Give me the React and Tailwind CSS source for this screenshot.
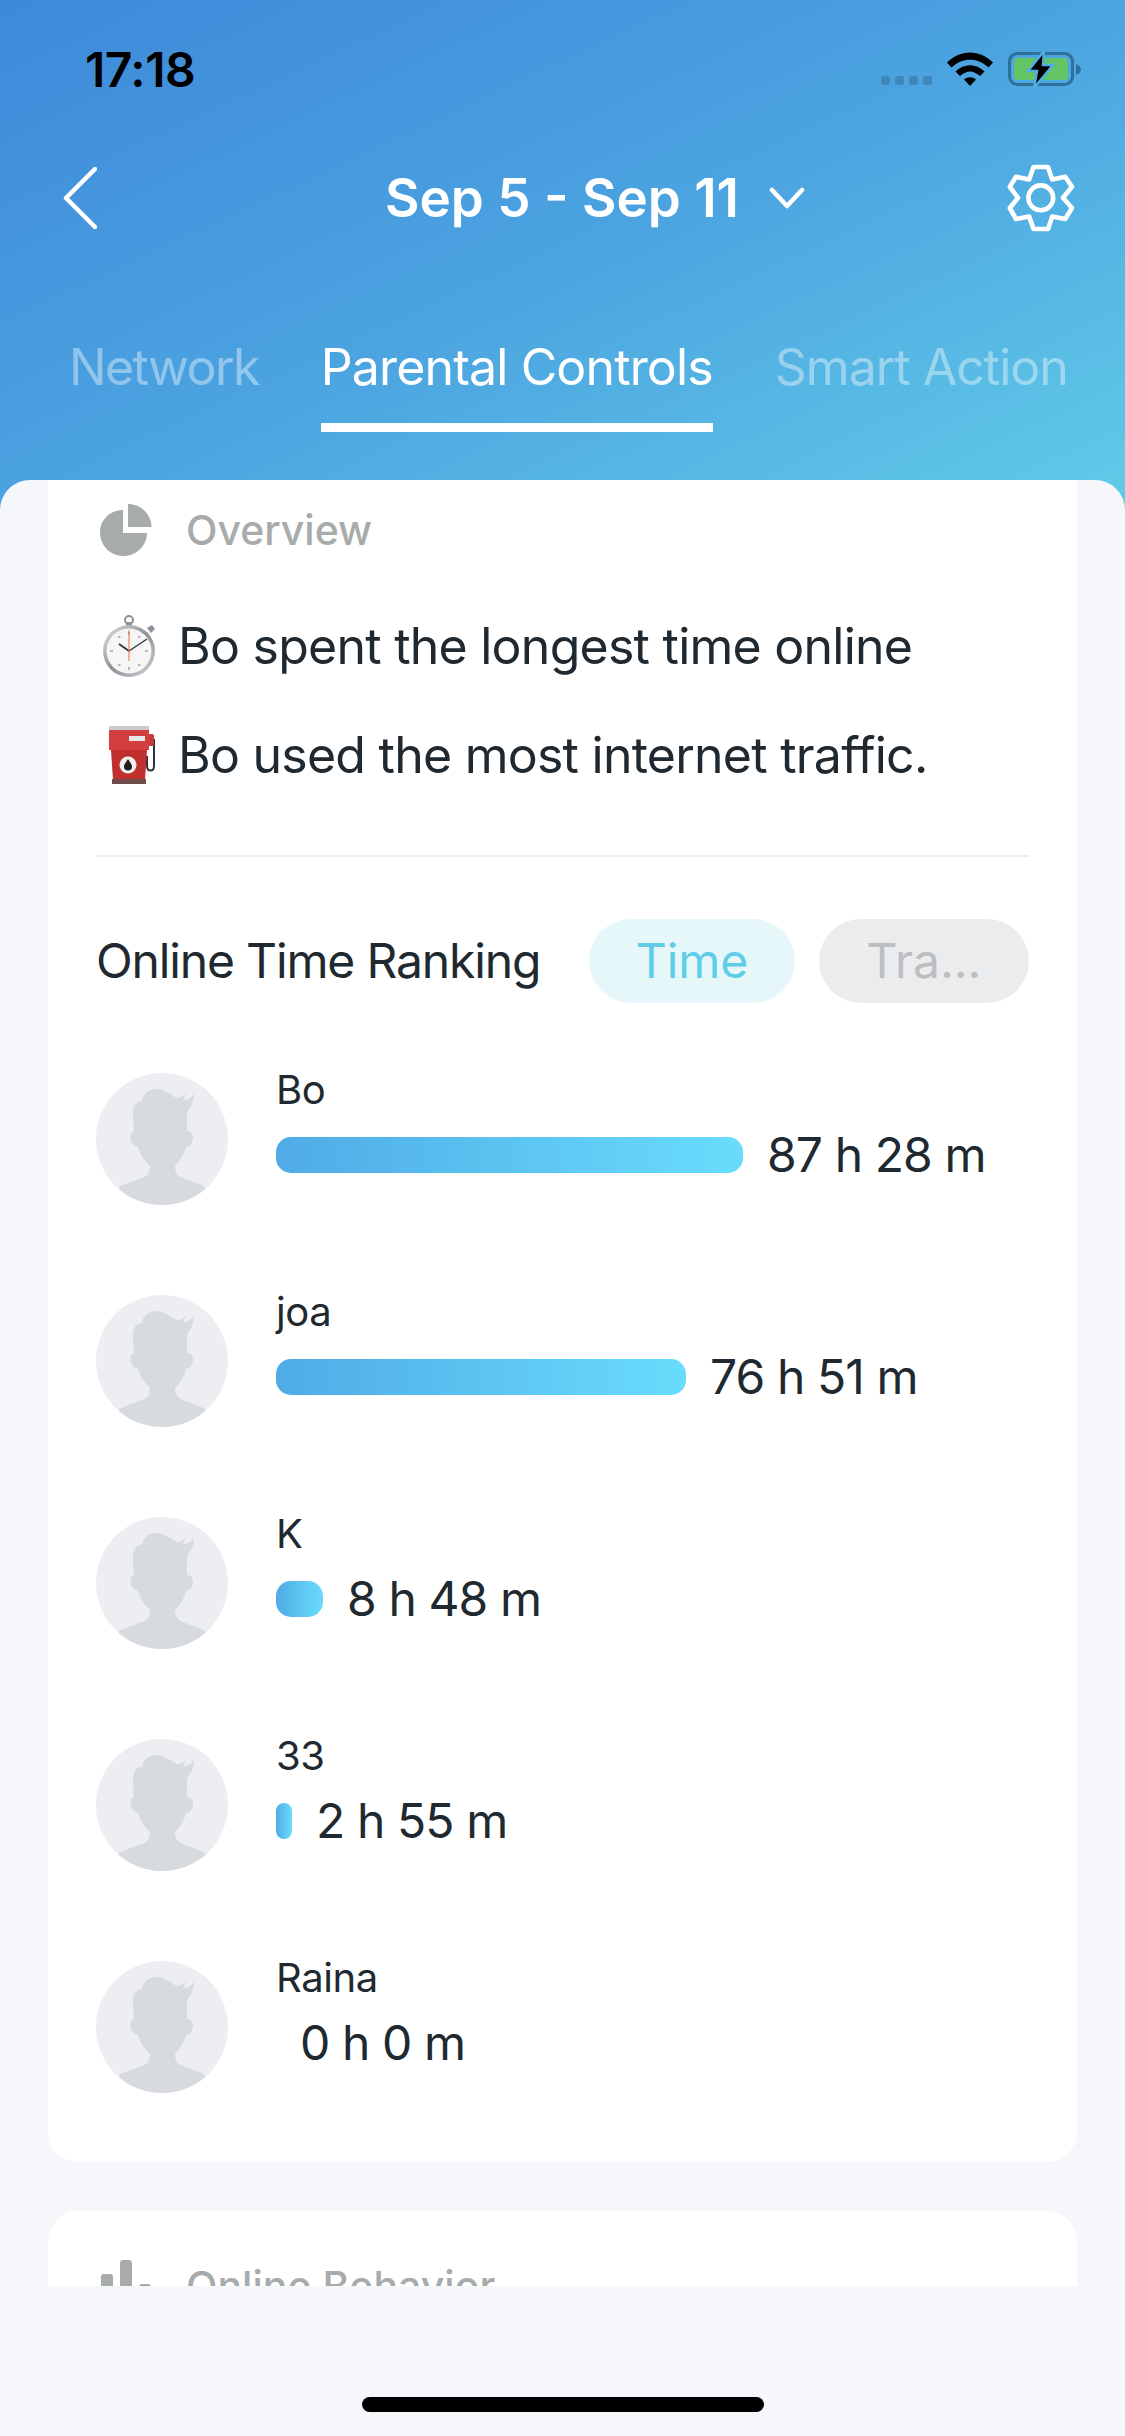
import React from 'react';

const rows = [
  { name: 'Bo', value: '87 h 28 m', barClass: 'w-[467px]' },
  { name: 'joa', value: '76 h 51 m', barClass: 'w-[410px]' },
  { name: 'K', value: '8 h 48 m', barClass: 'w-[47px]' },
  { name: '33', value: '2 h 55 m', barClass: 'w-[16px]' },
  { name: 'Raina', value: '0 h 0 m', barClass: 'w-0' },
];

const StatusIcons = () => (
  <div className="flex items-start">
    <div className="flex gap-[5px] mt-[24px]">
      <span className="w-[9px] h-[9px] rounded-[3px] bg-[#3f87b8]" />
      <span className="w-[9px] h-[9px] rounded-[3px] bg-[#3f87b8]" />
      <span className="w-[9px] h-[9px] rounded-[3px] bg-[#3f87b8]" />
      <span className="w-[9px] h-[9px] rounded-[3px] bg-[#3f87b8]" />
    </div>
    <svg className="ml-[15px]" width="46" height="34" viewBox="0 0 46 34">
      <path d="M0 10.5 C13 -3 33 -3 46 10.5 L41.5 15.5 C31 5 15 5 4.5 15.5 Z" fill="#000" />
      <path d="M8.5 19.5 C17 11 29 11 37.5 19.5 L33 24 C26 18 20 18 13 24 Z" fill="#000" />
      <path d="M17 27.5 C20.5 24.5 25.5 24.5 29 27.5 L23 34 Z" fill="#000" />
    </svg>
    <svg className="ml-[15px]" width="74" height="36" viewBox="0 0 74 36">
      <rect x="1.5" y="1.5" width="63" height="31" rx="8" fill="none" stroke="#2f6f98" strokeWidth="3" />
      <rect x="6" y="6" width="54" height="22" rx="3.5" fill="#63c466" />
      <path d="M68 12 C71 13 73 15 73 17.5 C73 20 71 22 68 23 Z" fill="#2f6f98" />
      <path d="M36 -1 L20 19 L29 19 L26 36 L45 13 L35 13 Z" fill="#000" stroke="#52aee2" strokeWidth="2.5" />
    </svg>
  </div>
);

const GearIcon = () => (
  <svg width="68" height="68" viewBox="0 0 68 68" fill="none" stroke="#fff" strokeWidth="4.6" strokeLinejoin="round">
    <path d="M26.5 3 H41 L45.2 15.5 L58.2 12.8 L65 22.8 L56 33.8 L65 44 L58.2 55 L45.2 52.5 L41 65 H26.5 L22.2 52.5 L9 55 L2.8 44 L11 33.8 L2.8 22.8 L9 12.8 L22.2 15.5 Z" />
    <circle cx="33.8" cy="33.8" r="12.4" />
  </svg>
);

const Stopwatch = () => (
  <svg className="shrink-0" width="54" height="62" viewBox="0 0 54 62">
    <defs>
      <linearGradient id="rim" x1="0" y1="0" x2="1" y2="1">
        <stop offset="0" stopColor="#e4e6e8" />
        <stop offset="0.5" stopColor="#8b8f96" />
        <stop offset="1" stopColor="#d3d6da" />
      </linearGradient>
    </defs>
    <circle cx="26" cy="5" r="4" fill="none" stroke="#8c9199" strokeWidth="2" />
    <rect x="23" y="7" width="6" height="4" fill="#8c9199" />
    <path d="M44 13 l5 -3 l3 4 l-4 4 Z" fill="#8c9199" />
    <circle cx="26" cy="36" r="26" fill="url(#rim)" />
    <circle cx="26" cy="36" r="22.5" fill="#f6f6f6" />
    <g fill="#b5b7ba">
      <rect x="25" y="17" width="2" height="3" />
      <rect x="25" y="52" width="2" height="3" />
      <rect x="7" y="35" width="3" height="2" />
      <rect x="42" y="35" width="3" height="2" />
      <rect x="15" y="21" width="2.5" height="2" />
      <rect x="35" y="21" width="2.5" height="2" />
      <rect x="15" y="49" width="2.5" height="2" />
      <rect x="35" y="49" width="2.5" height="2" />
    </g>
    <path d="M26 36 L44 24" stroke="#30343a" strokeWidth="1.4" />
    <path d="M26 36 L16 29" stroke="#30343a" strokeWidth="1.8" />
    <path d="M26 15 L26 46" stroke="#e8703f" strokeWidth="1" />
  </svg>
);

const FuelPump = () => (
  <svg className="shrink-0" width="52" height="58" viewBox="0 0 52 58">
    <path d="M42 10 L46 14 V40 C46 46 39 46 39 40 V30" fill="none" stroke="#30343a" strokeWidth="2" />
    <rect x="40" y="8" width="6" height="12" rx="2" fill="#c23a3a" />
    <rect x="1" y="0" width="40" height="6" fill="#c9cbcd" />
    <rect x="1" y="4" width="40" height="20" fill="#d33f3f" />
    <path d="M3 24 H39 L37 54 H5 Z" fill="#c22f2f" />
    <rect x="21" y="10" width="16" height="5" fill="#e8e8e8" />
    <rect x="4" y="53" width="34" height="5" fill="#6e4a48" />
    <circle cx="20" cy="39" r="8.5" fill="#f4f4f4" />
    <path d="M20 33 C22.5 37 24 38.5 24 40.5 A4 4 0 0 1 16 40.5 C16 38.5 17.5 37 20 33 Z" fill="#1e1e1e" />
  </svg>
);

const Avatar = () => (
  <svg className="shrink-0" width="132" height="132" viewBox="0 0 132 132">
    <defs>
      <clipPath id="avatarClip">
        <circle cx="66" cy="66" r="66" />
      </clipPath>
    </defs>
    <circle cx="66" cy="66" r="66" fill="#eceef2" />
    <path
      clipPath="url(#avatarClip)"
      d="M61 16 C53 16 47 20 46 28 C40 28 37 33 37 40 C37 48 38 55 38 58 C34 59 33 66 37 71 C39 73 41 74 42 74 C44 82 49 88 54 93 C54 98 53 101 50 103 C42 107 30 110 23 114 L23 132 L109 132 L109 114 C102 110 90 107 83 103 C80 100 79 97 79 93 C84 88 88 82 90 74 C94 74 97 70 97 64 C97 60 94 58 91 58 C91 50 90 44 92 37 C96 33 98 27 98 20 C96 25 92 27 87 27 C88 25 89 23 90 20 C88 23 85 25 81 25 C74 22 68 16 61 16 Z"
      fill="#d7dade"
    />
  </svg>
);

const OverviewIcon = () => (
  <svg width="52" height="52" viewBox="0 0 52 52" fill="#a7abab">
    <path d="M23 6 V29 H47 C47 42 36 52 23.5 52 C10.5 52 0 41.5 0 28.5 C0 16 10 6 23 6 Z" />
    <path d="M28 0 C41 0 51.5 10.5 51.5 23 H28 Z" />
  </svg>
);

const BarsIcon = () => (
  <svg className="shrink-0" width="52" height="52" viewBox="0 0 52 52" fill="#a7abab">
    <rect x="1" y="14" width="12" height="38" rx="3" />
    <rect x="20" y="0" width="12" height="52" rx="3" />
    <rect x="39" y="24" width="12" height="28" rx="3" />
  </svg>
);

const RankRow = ({ name, value, barClass }) => (
  <div className="flex h-[222px]">
    <Avatar />
    <div className="ml-[48px] flex flex-col">
      <div className="text-[40px] leading-[40px] h-[50px] -mt-[3px] text-[#20292f] tracking-[-0.4px]">{name}</div>
      <div className="flex items-center h-[60px] mt-[5px]">
        <div className={`${barClass} h-[36px] rounded-[15px] bg-[linear-gradient(90deg,#4fabe6,#69dcfc)]`} />
        <span className="ml-[24px] text-[48px] leading-[60px] text-[#20292f] tracking-[-0.9px]">{value}</span>
      </div>
    </div>
  </div>
);

export default function App() {
  return (
    <div className="w-[1125px] h-[2436px] overflow-hidden flex flex-col bg-[#f5f7fb] font-['Inter',sans-serif]">
      <header className="h-[510px] shrink-0 bg-[linear-gradient(155deg,#3e89da_0%,#4ba3e0_50%,#61cbe8_100%)]">
        <div className="flex justify-between items-start pt-[52px] pl-[85px] pr-[43px] h-[164px]">
          <span className="text-[48px] leading-[36px] font-semibold text-black tracking-[-0.5px]">17:18</span>
          <StatusIcons />
        </div>
        <div className="flex items-center pl-[63px] pr-[50px] h-[68px]">
          <svg width="34" height="62" viewBox="0 0 34 62" fill="none" stroke="#fff" strokeWidth="4.5" strokeLinecap="round" strokeLinejoin="round">
            <path d="M32 2 L3 31 L32 60" />
          </svg>
          <span className="ml-[288px] text-[53px] leading-[68px] font-semibold text-white">Sep 5 - Sep 11</span>
          <svg className="ml-[30px]" width="36" height="22" viewBox="0 0 36 22" fill="none" stroke="#fff" strokeWidth="4.5" strokeLinecap="round" strokeLinejoin="round">
            <path d="M3 3 L18 19 L33 3" />
          </svg>
          <div className="ml-auto">
            <GearIcon />
          </div>
        </div>
        <nav className="flex gap-[62px] pl-[69px] mt-[105px]">
          <span className="text-[50px] leading-[60px] text-white/40 tracking-[-1.6px]">Network</span>
          <div className="flex flex-col">
            <span className="text-[50px] leading-[60px] text-white tracking-[-0.85px]">Parental Controls</span>
            <span className="h-[9px] mt-[26px] bg-white" />
          </div>
          <span className="text-[50px] leading-[60px] text-white/40 tracking-[-1px]">Smart Action</span>
        </nav>
      </header>

      <main className="-mt-[30px] h-[1806px] shrink-0 rounded-t-[30px] overflow-hidden bg-[#f5f7fb] px-[48px]">
        <section className="h-[1682px] bg-white rounded-b-[30px] px-[48px] pt-[24px]">
          <div className="flex items-center gap-[36px] ml-[4px]">
            <OverviewIcon />
            <span className="text-[41px] leading-[52px] font-medium text-[#a7abab] -ml-[2px]">Overview</span>
          </div>
          <div className="flex items-center mt-[59px] h-[62px] ml-[7px]">
            <Stopwatch />
            <span className="ml-[21px] text-[50px] leading-[60px] text-[#20292f] tracking-[-0.75px]">Bo spent the longest time online</span>
          </div>
          <div className="flex items-center mt-[48px] h-[60px] ml-[12px]">
            <FuelPump />
            <span className="ml-[18px] text-[50px] leading-[60px] text-[#20292f] tracking-[-0.75px]">Bo used the most internet traffic.</span>
          </div>
          <div className="h-[2px] mt-[70px] bg-[#eceef0]" />
          <div className="flex items-center mt-[62px] h-[84px]">
            <span className="text-[48px] leading-[60px] text-[#20292f] tracking-[-1.15px] whitespace-nowrap">Online Time Ranking</span>
            <span className="ml-auto shrink-0 w-[206px] h-[84px] rounded-full bg-[#e6f7fa] text-[#5fcde8] text-[48px] leading-[84px] text-center">Time</span>
            <span className="ml-[24px] shrink-0 w-[210px] h-[84px] rounded-full bg-[#ebecee] text-[#bcbec1] text-[48px] leading-[84px] text-center">Tra...</span>
          </div>
          <div className="mt-[70px] flex flex-col">
            {rows.map((row) => (
              <RankRow key={row.name} {...row} />
            ))}
          </div>
        </section>
        <section className="mt-[49px] h-[200px] bg-white rounded-t-[30px] px-[52px] pt-[49px]">
          <div className="flex items-center gap-[36px]">
            <BarsIcon />
            <span className="text-[41px] leading-[52px] font-medium text-[#a7abab] -ml-[2px]">Online Behavior</span>
          </div>
        </section>
      </main>

      <div className="flex justify-center pt-[111px]">
        <div className="w-[402px] h-[15px] rounded-full bg-black" />
      </div>
    </div>
  );
}
